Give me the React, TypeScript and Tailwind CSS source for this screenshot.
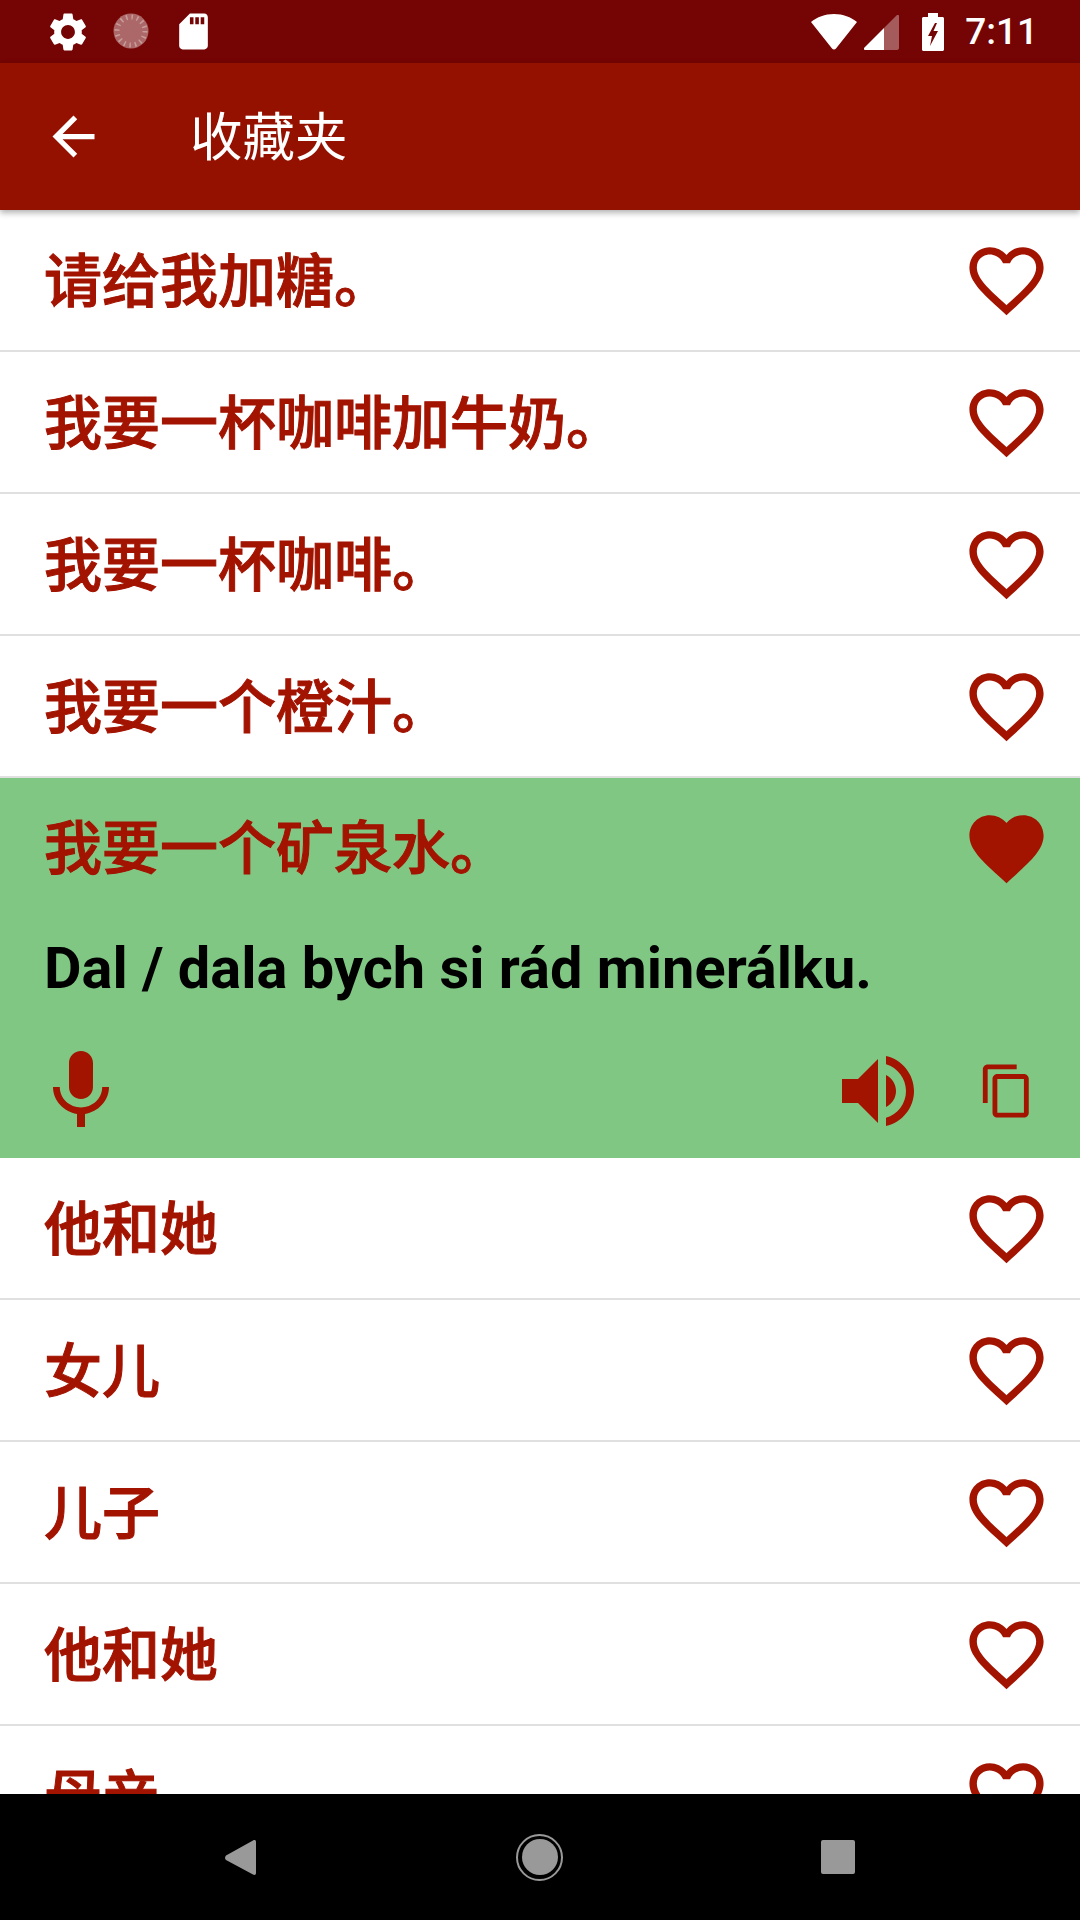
const HEART_OUTLINE =
  'M16.5 3c-1.74 0-3.41.81-4.5 2.09C10.91 3.81 9.24 3 7.5 3 4.42 3 2 5.42 2 8.5c0 3.78 3.4 6.86 8.55 11.54L12 21.35l1.45-1.32C18.6 15.36 22 12.28 22 8.5 22 5.42 19.58 3 16.5 3zm-4.4 15.55l-.1.1-.1-.1C7.14 14.24 4 11.39 4 8.5 4 6.5 5.5 5 7.5 5c1.54 0 3.04.99 3.57 2.36h1.87C13.46 5.99 14.96 5 16.5 5c2 0 3.5 1.5 3.5 3.5 0 2.89-3.14 5.74-7.9 10.05z';
const HEART_FILLED =
  'M12 21.35l-1.45-1.32C5.4 15.36 2 12.28 2 8.5 2 5.42 4.42 3 7.5 3c1.74 0 3.41.81 4.5 2.09C13.09 3.81 14.76 3 16.5 3 19.58 3 22 5.42 22 8.5c0 3.78-3.4 6.86-8.55 11.54L12 21.35z';

const CJK = "font-['Roboto','Noto_Sans_CJK_SC',sans-serif]";

function Icon({ d, className }: { d: string; className: string }) {
  return (
    <svg viewBox="0 0 24 24" fill="currentColor" className={className}>
      <path d={d} />
    </svg>
  );
}

function StatusBar() {
  return (
    <div className="flex h-[63px] shrink-0 items-center bg-[#750404] text-white">
      {/* Left notification icons */}
      <div className="ml-[45px] flex items-center">
        <Icon
          className="h-[46px] w-[46px]"
          d="M19.14 12.94c.04-.3.06-.61.06-.94 0-.32-.02-.64-.07-.94l2.03-1.58c.18-.14.23-.41.12-.61l-1.92-3.32c-.12-.22-.37-.29-.59-.22l-2.39.96c-.5-.38-1.03-.7-1.62-.94l-.36-2.54c-.04-.24-.24-.41-.48-.41h-3.84c-.24 0-.43.17-.47.41l-.36 2.54c-.59.24-1.13.57-1.62.94l-2.39-.96c-.22-.08-.47 0-.59.22L2.74 8.87c-.12.21-.08.47.12.61l2.03 1.58c-.05.3-.09.63-.09.94s.02.64.07.94l-2.03 1.58c-.18.14-.23.41-.12.61l1.92 3.32c.12.22.37.29.59.22l2.39-.96c.5.38 1.03.7 1.62.94l.36 2.54c.05.24.24.41.48.41h3.84c.24 0 .44-.17.47-.41l.36-2.54c.59-.24 1.13-.56 1.62-.94l2.39.96c.22.08.47 0 .59-.22l1.92-3.32c.12-.22.07-.47-.12-.61l-2.01-1.58zM12 15.6c-1.98 0-3.6-1.62-3.6-3.6s1.62-3.6 3.6-3.6 3.6 1.62 3.6 3.6-1.62 3.6-3.6 3.6z"
        />
        <svg viewBox="0 0 38 38" className="ml-[22px] h-[38px] w-[38px]">
          <circle cx="18" cy="18" r="17.5" fill="#fff" fillOpacity="0.4" />
          <path d="M34 11a18 18 0 0 1-24 24 18 18 0 0 0 24-24z" fill="#fff" />
          <circle cx="18" cy="18" r="14" fill="none" stroke="#fff" strokeOpacity="0.35" strokeWidth="5" strokeDasharray="1.5 4" />
        </svg>
        <Icon
          className="ml-[21px] h-[43px] w-[43px]"
          d="M18 2h-8L4.02 8 4 20c0 1.1.9 2 2 2h12c1.1 0 2-.9 2-2V4c0-1.1-.9-2-2-2zm-6 6h-2V4h2v4zm3 0h-2V4h2v4zm3 0h-2V4h2v4z"
        />
      </div>

      {/* Right system icons */}
      <div className="ml-auto flex items-center pr-[42px]">
        <svg viewBox="0 0 46 36" className="h-[36px] w-[46px]">
          <path d="M23 0C14 0 6 3 0 8l21 26.500c1 1.300 3 1.300 4 0L46 8C40 3 32 0 23 0z" fill="#fff" />
        </svg>
        <svg viewBox="0 0 35 35" className="ml-[7px] mt-[2px] h-[35px] w-[35px]">
          <path d="M0 33 20 13v22H2c-2 0-3-1-2-2z" fill="#fff" />
          <path d="M20 13 33 0c1-1 2 0 2 1v32c0 1-1 2-2 2H20z" fill="#fff" fillOpacity="0.35" />
        </svg>
        <svg viewBox="0 0 22 38" className="ml-[23px] h-[38px] w-[22px]">
          <path
            fillRule="evenodd"
            d="M6 0h10v4h4.500c.8 0 1.500.7 1.500 1.500v31c0 .8-.7 1.500-1.500 1.500h-19C.7 38 0 37.300 0 36.500v-31C0 4.700.7 4 1.500 4H6zM13 10 6 23h4l-2 10 8-15h-4.500L15 10z"
            fill="#fff"
          />
        </svg>
        <span className="ml-[21px] font-['Roboto',sans-serif] text-[37px] leading-none font-medium">7:11</span>
      </div>
    </div>
  );
}

function AppBar() {
  return (
    <div className="relative z-10 flex h-[147px] shrink-0 items-center bg-[#941100] text-white shadow-[0_3px_6px_rgba(0,0,0,0.3)]">
      <Icon className="ml-[42px] h-[63px] w-[63px]" d="M20 11H7.83l5.59-5.59L12 4l-8 8 8 8 1.41-1.41L7.83 13H20v-2z" />
      <span className={`ml-[85px] pt-[4px] ${CJK} text-[52.5px] leading-none`}>收藏夹</span>
    </div>
  );
}

function Row({ text }: { text: string }) {
  return (
    <div className="flex h-[142px] shrink-0 items-center justify-between border-b-2 border-[#e0e0e0] bg-white pl-[44px] pr-[29px]">
      <span className={`pt-[3px] ${CJK} text-[58px] leading-none font-medium text-[#a21300] [-webkit-text-stroke:1px_#a21300]`}>{text}</span>
      <Icon className="h-[89px] w-[89px] text-[#a21300]" d={HEART_OUTLINE} />
    </div>
  );
}

function ExpandedRow({ text, translation }: { text: string; translation: string }) {
  return (
    <div className="h-[380px] shrink-0 bg-[#81c784]">
      <div className="flex h-[142px] items-center justify-between pl-[44px] pr-[29px]">
        <span className={`${CJK} text-[58px] leading-none font-medium text-[#a21300] [-webkit-text-stroke:1px_#a21300]`}>{text}</span>
        <Icon className="-mt-[2px] h-[89px] w-[89px] text-[#a21300]" d={HEART_FILLED} />
      </div>
      <p className="mt-[10px] pl-[44px] font-['Roboto',sans-serif] text-[57.75px] leading-[76px] font-bold text-black">
        {translation}
      </p>
      <div className="mt-[37px] flex items-center pl-[33px] text-[#a21300]">
        <Icon
          className="h-[96px] w-[96px]"
          d="M12 14c1.66 0 2.99-1.34 2.99-3L15 5c0-1.66-1.34-3-3-3S9 3.34 9 5v6c0 1.66 1.34 3 3 3zm5.3-3c0 3-2.54 5.1-5.3 5.1S6.7 14 6.7 11H5c0 3.41 2.72 6.23 6 6.72V21h2v-3.28c3.28-.48 6-3.3 6-6.72h-1.7z"
        />
        <Icon
          className="ml-auto h-[96px] w-[96px]"
          d="M3 9v6h4l5 5V4L7 9H3zm13.5 3c0-1.77-1.02-3.29-2.5-4.03v8.05c1.48-.73 2.5-2.25 2.5-4.02zM14 3.23v2.06c2.89.86 5 3.54 5 6.71s-2.11 5.85-5 6.71v2.06c4.01-.91 7-4.49 7-8.77s-2.99-7.86-7-8.77z"
        />
        <Icon
          className="ml-[52px] mr-[44px] h-[58px] w-[58px]"
          d="M16 1H4c-1.1 0-2 .9-2 2v14h2V3h12V1zm3 4H8c-1.1 0-2 .9-2 2v14c0 1.1.9 2 2 2h11c1.1 0 2-.9 2-2V7c0-1.1-.9-2-2-2zm0 16H8V7h11v14z"
        />
      </div>
    </div>
  );
}

function NavBar() {
  return (
    <div className="relative z-10 flex h-[126px] shrink-0 items-center bg-black">
      <svg viewBox="0 0 31 35" className="ml-[225px] h-[35px] w-[31px]">
        <path d="M1 20c-1.300-1.500-1.300-3 0-4.500L28 .5c1.500-1 3-.5 3 1.500v31c0 2-1.500 2.500-3 1.500z" fill="#999" />
      </svg>
      <div className="ml-[260px] flex h-[47px] w-[47px] items-center justify-center rounded-full border-2 border-[#999]">
        <div className="h-[36px] w-[36px] rounded-full bg-[#999]" />
      </div>
      <div className="ml-[258px] h-[34px] w-[34px] rounded-[2px] bg-[#999]" />
    </div>
  );
}

export default function App() {
  const before = ['请给我加糖。', '我要一杯咖啡加牛奶。', '我要一杯咖啡。', '我要一个橙汁。'];
  const after = ['他和她', '女儿', '儿子', '他和她', '母亲'];

  return (
    <div className="flex h-[1920px] w-[1080px] flex-col overflow-hidden bg-white">
      <StatusBar />
      <AppBar />
      {/* Favourites list, cut off by the nav bar */}
      <div className="flex min-h-0 flex-1 flex-col overflow-hidden">
        {before.map((t) => (
          <Row key={t} text={t} />
        ))}
        <ExpandedRow text="我要一个矿泉水。" translation="Dal / dala bych si rád minerálku." />
        {after.map((t, i) => (
          <Row key={i} text={t} />
        ))}
      </div>
      <NavBar />
    </div>
  );
}
